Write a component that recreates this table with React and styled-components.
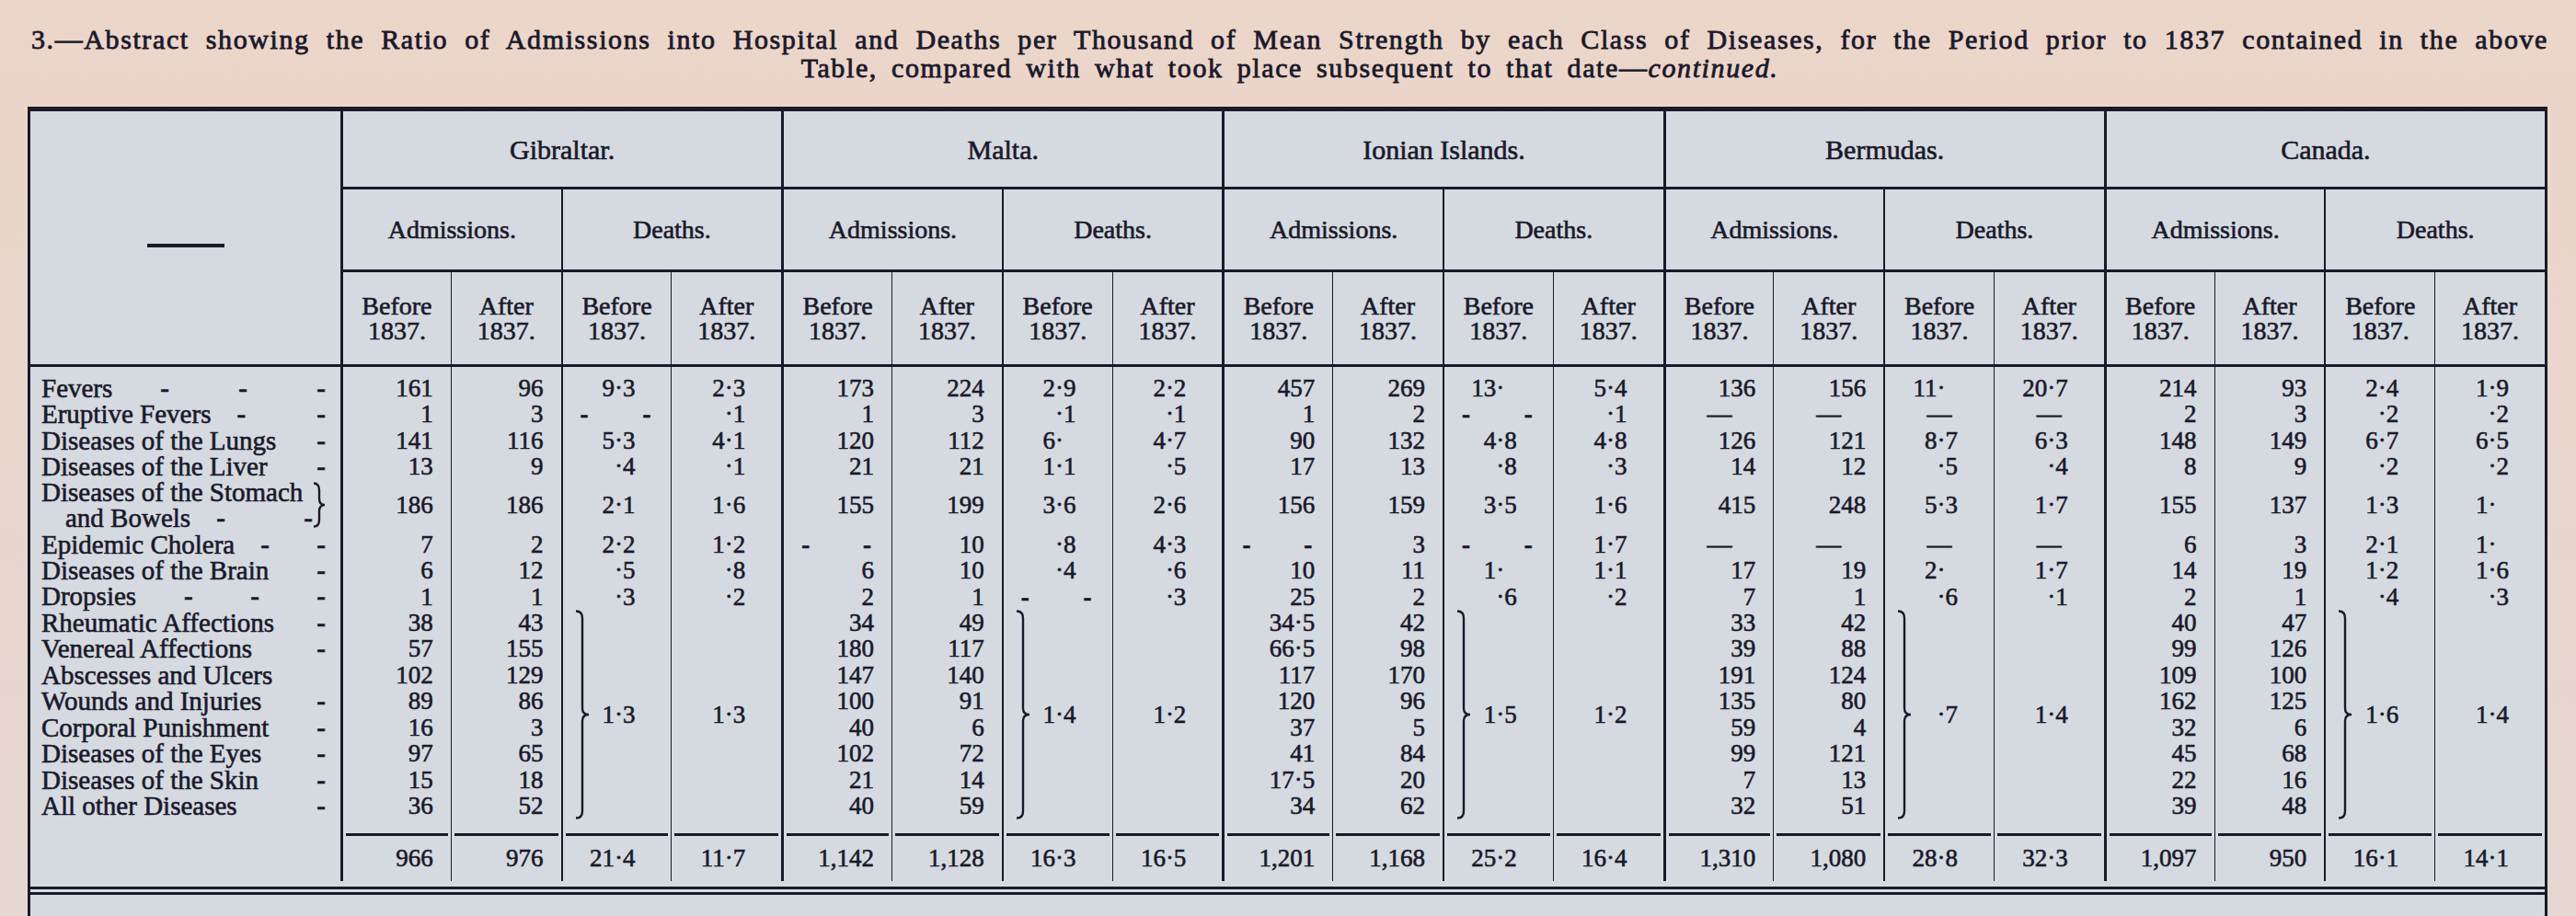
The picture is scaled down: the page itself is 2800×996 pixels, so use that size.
import React from 'react';
import styled, { createGlobalStyle } from 'styled-components';

const INK = '#1a192a';

const GlobalStyle = createGlobalStyle`
  html, body { margin: 0; padding: 0; }
  body {
    background: #e9d6cc;
    font-family: "Liberation Serif", "Times New Roman", serif;
    color: ${INK};
  }
`;

// sheet of paper, pinkish above the table
const Page = styled.div`
  width: 2800px;
  height: 996px;
  overflow: hidden;
  background: linear-gradient(180deg, #ecd5c9 0%, #e6d7d2 100%);
  -webkit-text-stroke: 0.6px ${INK};
`;

const Title = styled.div`
  padding: 27px 30px 0 34px;
  font-size: 30px;
  line-height: 31px;
  letter-spacing: 1.6px;
  word-spacing: 6px;
  -webkit-text-stroke: 0.8px ${INK};
`;

const TitleLine = styled.div`
  text-align: justify;
  text-align-last: justify;
`;

const TitleLineCentered = styled.div`
  text-align: center;
`;

const Sheet = styled.div`
  margin: 27px 31px 0 30px;
  background: #d5dae1;
`;

const Table = styled.table`
  width: 100%;
  table-layout: fixed;
  border-collapse: separate;
  border-spacing: 0;
  border-top: 5px solid ${INK};
  border-left: 3px solid ${INK};
  border-right: 3px solid ${INK};
`;

const LabelCol = styled.col`
  width: 337px;
`;

const HeadCell = styled.th`
  font-weight: normal;
  font-size: ${p => p.$size || 28}px;
  line-height: 27px;
  text-align: center;
  vertical-align: middle;
  padding: 0;
  height: ${p => p.$h}px;
  border-left: ${p => p.$sep || 0}px solid ${INK};
  border-bottom: 3px solid ${INK};
`;

const HeadDash = styled.div`
  width: 84px;
  height: 4px;
  margin: 16px auto 0;
  background: ${INK};
`;

const Cell = styled.td`
  padding: 0;
  height: ${p => p.$h}px;
  vertical-align: middle;
  border-left: ${p => p.$sep}px solid ${INK};
  font-size: 27px;
  line-height: 28px;
  white-space: nowrap;
`;

const Num = styled.div`
  text-align: right;
  padding-right: ${p => (p.$kind === 'adm' ? 19 : 39)}px;
`;

const Ghost = styled.span`
  visibility: hidden;
`;

const Nil = styled.div`
  display: flex;
  justify-content: space-between;
  padding: 0 22px 0 19px;
  font-weight: bold;
`;

const Blank = styled.div`
  text-align: center;
`;

const LabelCell = styled.td`
  padding: 0 16px 0 12px;
  height: ${p => p.$h}px;
  vertical-align: middle;
  font-size: 29px;
  line-height: 28.3px;
  white-space: nowrap;
`;

const LabelLine = styled.div`
  display: flex;
  align-items: center;
  padding-left: ${p => p.$indent || 0}px;
`;

const Leaders = styled.span`
  flex: 1;
  display: flex;
  justify-content: ${p => (p.$n > 1 ? 'space-between' : 'flex-end')};
  padding-left: ${p => (p.$n > 2 ? 52 : 28)}px;
  font-weight: bold;
`;

const Grouped = styled.div`
  display: flex;
  align-items: center;
`;

const GroupedLines = styled.div`
  flex: 1;
`;

const BraceBlock = styled.div`
  display: flex;
  align-items: center;
  justify-content: space-between;
  padding: 0 39px 0 13px;
`;

const TotalCell = styled.td`
  padding: 0;
  height: 52px;
  vertical-align: top;
  border-left: ${p => p.$sep}px solid ${INK};
`;

const TotalInner = styled.div`
  margin: 0 3px;
  height: 49px;
  border-top: 3px solid ${INK};
  display: flex;
  align-items: center;
  justify-content: flex-end;
  padding-right: ${p => (p.$kind === 'adm' ? 16 : 36)}px;
  font-size: 27px;
  white-space: nowrap;
`;

const Tail = styled.div`
  box-sizing: border-box;
  height: 40px;
  padding-top: 6px;
  border-left: 3px solid ${INK};
  border-right: 3px solid ${INK};
`;

const DoubleRule = styled.div`
  border-top: 9px double ${INK};
`;

function Brace({ h, w = 16 }) {
  const m = h / 2;
  const x = w / 2;
  return (
    <svg width={w} height={h} viewBox={`0 0 ${w} ${h}`}>
      <path
        d={`M1,1.5 Q${x},1.5 ${x},9 L${x},${m - 7} Q${x},${m} ${w - 1},${m} Q${x},${m} ${x},${m + 7} L${x},${h - 9} Q${x},${h - 1.5} 1,${h - 1.5}`}
        fill="none"
        stroke={INK}
        strokeWidth="2.4"
      />
    </svg>
  );
}

const ROW = 28.3;

const labels = [
  { name: 'Fevers', dashes: 3 },
  { name: 'Eruptive Fevers', dashes: 2 },
  { name: 'Diseases of the Lungs', dashes: 1 },
  { name: 'Diseases of the Liver', dashes: 1 },
  { name: 'Diseases of the Stomach', more: 'and Bowels', dashes: 2, slots: 2 },
  { name: 'Epidemic Cholera', dashes: 2 },
  { name: 'Diseases of the Brain', dashes: 1 },
  { name: 'Dropsies', dashes: 3 },
  { name: 'Rheumatic Affections', dashes: 1 },
  { name: 'Venereal Affections', dashes: 1 },
  { name: 'Abscesses and Ulcers', dashes: 0 },
  { name: 'Wounds and Injuries', dashes: 1 },
  { name: 'Corporal Punishment', dashes: 1 },
  { name: 'Diseases of the Eyes', dashes: 1 },
  { name: 'Diseases of the Skin', dashes: 1 },
  { name: 'All other Diseases', dashes: 1 },
];

const places = [
  {
    name: 'Gibraltar.',
    rows: [
      ['161', '96', '9·3', '2·3'],
      ['1', '3', '- -', '·1'],
      ['141', '116', '5·3', '4·1'],
      ['13', '9', '·4', '·1'],
      ['186', '186', '2·1', '1·6'],
      ['7', '2', '2·2', '1·2'],
      ['6', '12', '·5', '·8'],
      ['1', '1', '·3', '·2'],
    ],
    group: [['38', '43'], ['57', '155'], ['102', '129'], ['89', '86'], ['16', '3'], ['97', '65'], ['15', '18'], ['36', '52']],
    merged: ['1·3', '1·3'],
    total: ['966', '976', '21·4', '11·7'],
  },
  {
    name: 'Malta.',
    rows: [
      ['173', '224', '2·9', '2·2'],
      ['1', '3', '·1', '·1'],
      ['120', '112', '6·', '4·7'],
      ['21', '21', '1·1', '·5'],
      ['155', '199', '3·6', '2·6'],
      ['- -', '10', '·8', '4·3'],
      ['6', '10', '·4', '·6'],
      ['2', '1', '- -', '·3'],
    ],
    group: [['34', '49'], ['180', '117'], ['147', '140'], ['100', '91'], ['40', '6'], ['102', '72'], ['21', '14'], ['40', '59']],
    merged: ['1·4', '1·2'],
    total: ['1,142', '1,128', '16·3', '16·5'],
  },
  {
    name: 'Ionian Islands.',
    rows: [
      ['457', '269', '13·', '5·4'],
      ['1', '2', '- -', '·1'],
      ['90', '132', '4·8', '4·8'],
      ['17', '13', '·8', '·3'],
      ['156', '159', '3·5', '1·6'],
      ['- -', '3', '- -', '1·7'],
      ['10', '11', '1·', '1·1'],
      ['25', '2', '·6', '·2'],
    ],
    group: [['34·5', '42'], ['66·5', '98'], ['117', '170'], ['120', '96'], ['37', '5'], ['41', '84'], ['17·5', '20'], ['34', '62']],
    merged: ['1·5', '1·2'],
    total: ['1,201', '1,168', '25·2', '16·4'],
  },
  {
    name: 'Bermudas.',
    rows: [
      ['136', '156', '11·', '20·7'],
      ['—', '—', '—', '—'],
      ['126', '121', '8·7', '6·3'],
      ['14', '12', '·5', '·4'],
      ['415', '248', '5·3', '1·7'],
      ['—', '—', '—', '—'],
      ['17', '19', '2·', '1·7'],
      ['7', '1', '·6', '·1'],
    ],
    group: [['33', '42'], ['39', '88'], ['191', '124'], ['135', '80'], ['59', '4'], ['99', '121'], ['7', '13'], ['32', '51']],
    merged: ['·7', '1·4'],
    total: ['1,310', '1,080', '28·8', '32·3'],
  },
  {
    name: 'Canada.',
    rows: [
      ['214', '93', '2·4', '1·9'],
      ['2', '3', '·2', '·2'],
      ['148', '149', '6·7', '6·5'],
      ['8', '9', '·2', '·2'],
      ['155', '137', '1·3', '1·'],
      ['6', '3', '2·1', '1·'],
      ['14', '19', '1·2', '1·6'],
      ['2', '1', '·4', '·3'],
    ],
    group: [['40', '47'], ['99', '126'], ['109', '100'], ['162', '125'], ['32', '6'], ['45', '68'], ['22', '16'], ['39', '48']],
    merged: ['1·6', '1·4'],
    total: ['1,097', '950', '16·1', '14·1'],
  },
];

// line width left of each of the four columns of a place
const sepOf = k => (k === 0 ? 3 : k === 2 ? 2 : 1);
const kindOf = k => (k < 2 ? 'adm' : 'death');

function Value({ v, kind }) {
  if (v === '- -') return <Nil><span>-</span><span>-</span></Nil>;
  if (v === '—') return <Blank>—</Blank>;
  if (v.endsWith('·')) return <Num $kind={kind}>{v}<Ghost>0</Ghost></Num>;
  return <Num $kind={kind}>{v}</Num>;
}

function Dashes({ n }) {
  if (!n) return null;
  return (
    <Leaders $n={n}>
      {Array.from({ length: n }).map((_, i) => <span key={i}>-</span>)}
    </Leaders>
  );
}

function Label({ row, h }) {
  if (row.more) {
    return (
      <LabelCell $h={h}>
        <Grouped>
          <GroupedLines>
            <LabelLine>{row.name}</LabelLine>
            <LabelLine $indent={26}>{row.more}<Dashes n={row.dashes} /></LabelLine>
          </GroupedLines>
          <Brace h={50} w={14} />
        </Grouped>
      </LabelCell>
    );
  }
  return (
    <LabelCell $h={h}>
      <LabelLine>{row.name}<Dashes n={row.dashes} /></LabelLine>
    </LabelCell>
  );
}

function SpacerRow({ h }) {
  return (
    <tr>
      <LabelCell $h={h} />
      {places.map((p, pi) => [0, 1, 2, 3].map(k => <Cell key={pi + '-' + k} $h={h} $sep={sepOf(k)} />))}
    </tr>
  );
}

function BodyRow({ row, r }) {
  const h = (row.slots || 1) * ROW;
  return (
    <tr>
      <Label row={row} h={h} />
      {places.map((p, pi) => {
        if (r < 8) {
          return p.rows[r].map((v, k) => (
            <Cell key={pi + '-' + k} $h={h} $sep={sepOf(k)}>
              <Value v={v} kind={kindOf(k)} />
            </Cell>
          ));
        }
        const g = p.group[r - 8];
        return (
          <React.Fragment key={pi}>
            <Cell $h={h} $sep={sepOf(0)}><Value v={g[0]} kind="adm" /></Cell>
            <Cell $h={h} $sep={sepOf(1)}><Value v={g[1]} kind="adm" /></Cell>
            {r === 8 && (
              <>
                <Cell rowSpan={8} $sep={sepOf(2)}>
                  <BraceBlock>
                    <Brace h={228} />
                    <span>{p.merged[0]}</span>
                  </BraceBlock>
                </Cell>
                <Cell rowSpan={8} $sep={sepOf(3)}>
                  <Value v={p.merged[1]} kind="death" />
                </Cell>
              </>
            )}
          </React.Fragment>
        );
      })}
    </tr>
  );
}

export default function App() {
  return (
    <Page>
      <GlobalStyle />
      <Title>
        <TitleLine>
          3.—Abstract showing the Ratio of Admissions into Hospital and Deaths per Thousand of Mean Strength by each Class of Diseases, for the Period prior to 1837 contained in the above
        </TitleLine>
        <TitleLineCentered>
          Table, compared with what took place subsequent to that date—<em>continued.</em>
        </TitleLineCentered>
      </Title>

      <Sheet>
        <Table>
          <colgroup>
            <LabelCol />
            {Array.from({ length: 20 }).map((_, i) => <col key={i} />)}
          </colgroup>
          <thead>
            <tr>
              <HeadCell rowSpan={3} $h={82}><HeadDash /></HeadCell>
              {places.map(p => (
                <HeadCell key={p.name} colSpan={4} $h={82} $sep={3} $size={30}>{p.name}</HeadCell>
              ))}
            </tr>
            <tr>
              {places.map(p => (
                <React.Fragment key={p.name}>
                  <HeadCell colSpan={2} $h={87} $sep={3}>Admissions.</HeadCell>
                  <HeadCell colSpan={2} $h={87} $sep={2}>Deaths.</HeadCell>
                </React.Fragment>
              ))}
            </tr>
            <tr>
              {places.map(p => [0, 1, 2, 3].map(k => (
                <HeadCell key={p.name + k} $h={100} $sep={sepOf(k)}>
                  {k % 2 === 0 ? 'Before' : 'After'}<br />1837.
                </HeadCell>
              )))}
            </tr>
          </thead>
          <tbody>
            <SpacerRow h={9} />
            {labels.map((row, r) => <BodyRow key={row.name} row={row} r={r} />)}
            <SpacerRow h={15} />
            <tr>
              <LabelCell $h={52} />
              {places.map((p, pi) => p.total.map((v, k) => (
                <TotalCell key={pi + '-' + k} $sep={sepOf(k)}>
                  <TotalInner $kind={kindOf(k)}>{v}</TotalInner>
                </TotalCell>
              )))}
            </tr>
          </tbody>
        </Table>
        <Tail>
          <DoubleRule />
        </Tail>
      </Sheet>
    </Page>
  );
}
